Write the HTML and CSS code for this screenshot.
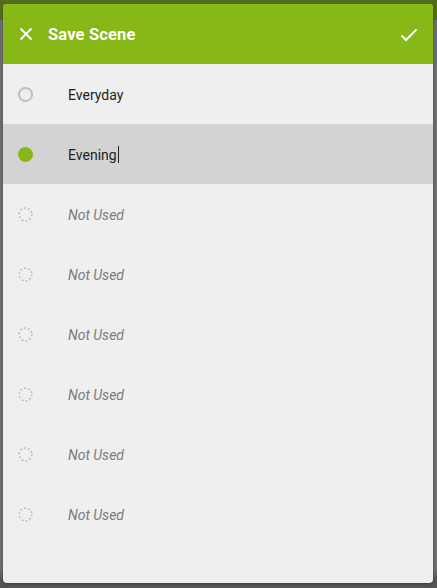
FILE: index.html
```html
<!DOCTYPE html>
<html>
<head>
<meta charset="utf-8">
<link rel="stylesheet" href="styles.css">
</head>
<body>
<div class="backdrop">
  <div class="topstrip"></div>
  <div class="dialog">
    <header class="bar">
      <button class="icon-btn close" aria-label="Close">
        <svg width="14" height="14" viewBox="0 0 14 14"><path d="M1.5 1.5 L12.5 12.5 M12.5 1.5 L1.5 12.5" stroke="#fff" stroke-width="1.8" fill="none"/></svg>
      </button>
      <h1 class="title">Save Scene</h1>
      <button class="icon-btn ok" aria-label="Save">
        <svg width="18" height="14" viewBox="0 0 18 14"><path d="M1.5 7.5 L6 12 L16.5 1.5" stroke="#fff" stroke-width="2" fill="none"/></svg>
      </button>
    </header>
    <ul class="list">
      <li class="row"><span class="radio"></span><span class="label">Everyday</span></li>
      <li class="row selected"><span class="radio on"></span><span class="label">Evening<span class="caret"></span></span></li>
      <li class="row"><svg class="dots" width="15" height="15" viewBox="0 0 15 15"><circle cx="7.5" cy="7.5" r="6.4" fill="none" stroke="#b4b4b4" stroke-width="1.5" stroke-dasharray="1.6 2.4"/></svg><span class="label unused">Not Used</span></li>
      <li class="row"><svg class="dots" width="15" height="15" viewBox="0 0 15 15"><circle cx="7.5" cy="7.5" r="6.4" fill="none" stroke="#b4b4b4" stroke-width="1.5" stroke-dasharray="1.6 2.4"/></svg><span class="label unused">Not Used</span></li>
      <li class="row"><svg class="dots" width="15" height="15" viewBox="0 0 15 15"><circle cx="7.5" cy="7.5" r="6.4" fill="none" stroke="#b4b4b4" stroke-width="1.5" stroke-dasharray="1.6 2.4"/></svg><span class="label unused">Not Used</span></li>
      <li class="row"><svg class="dots" width="15" height="15" viewBox="0 0 15 15"><circle cx="7.5" cy="7.5" r="6.4" fill="none" stroke="#b4b4b4" stroke-width="1.5" stroke-dasharray="1.6 2.4"/></svg><span class="label unused">Not Used</span></li>
      <li class="row"><svg class="dots" width="15" height="15" viewBox="0 0 15 15"><circle cx="7.5" cy="7.5" r="6.4" fill="none" stroke="#b4b4b4" stroke-width="1.5" stroke-dasharray="1.6 2.4"/></svg><span class="label unused">Not Used</span></li>
      <li class="row"><svg class="dots" width="15" height="15" viewBox="0 0 15 15"><circle cx="7.5" cy="7.5" r="6.4" fill="none" stroke="#b4b4b4" stroke-width="1.5" stroke-dasharray="1.6 2.4"/></svg><span class="label unused">Not Used</span></li>
    </ul>
  </div>
</div>
</body>
</html>
```
FILE: styles.css
```css
* { box-sizing: border-box; }
html, body { margin: 0; padding: 0; }
body {
  width: 437px;
  height: 588px;
  overflow: hidden;
  font-family: Roboto, "Liberation Sans", sans-serif;
  background: #6a6a6a;
}
.backdrop {
  position: relative;
  width: 437px;
  height: 588px;
  padding: 4px 4px 5px 3px;
  background: linear-gradient(to bottom, #6e6e6e 0, #6e6e6e 570px, #555 580px);
}
.topstrip {
  position: absolute;
  left: 0; top: 0; right: 0;
  height: 20px;
  background: #536e1b;
}
.dialog {
  position: relative;
  height: 579px;
  background: #efefef;
  border-radius: 4px;
  overflow: hidden;
  display: flex;
  flex-direction: column;
  box-shadow: 0 1px 3px rgba(0,0,0,0.3);
}
.bar {
  height: 60px;
  background: #86b817;
  display: flex;
  align-items: center;
  padding: 0 14px 0 14px;
  flex: none;
}
.icon-btn {
  background: none;
  border: 0;
  padding: 0;
  display: flex;
  align-items: center;
  justify-content: center;
  cursor: pointer;
}
.close { width: 16px; height: 20px; margin-left: 1px; }
.title {
  margin: 1px 0 0 14px;
  font-size: 16.5px;
  font-weight: 700;
  color: #fff;
  flex: 1;
  letter-spacing: 0.15px;
}
.ok { width: 20px; height: 20px; margin-top: 1px; }
.list {
  list-style: none;
  margin: 0;
  padding: 0;
}
.row {
  height: 60px;
  display: flex;
  align-items: center;
  padding-left: 15px;
  padding-top: 1px;
}
.row.selected { background: #d3d3d3; }
.radio {
  width: 15px;
  height: 15px;
  border-radius: 50%;
  border: 2px solid #bdbdbd;
  flex: none;
}
.radio.on { border: 0; background: #86b817; }
.dots { flex: none; display: block; }
.label {
  margin-left: 35px;
  font-size: 14px;
  color: #222;
  display: inline-flex;
  align-items: center;
}
.label.unused {
  font-style: italic;
  color: #7c7c7c;
  font-size: 14px;
}
.caret {
  display: inline-block;
  width: 1px;
  height: 17px;
  background: #222;
  margin-left: 1px;
}
```
